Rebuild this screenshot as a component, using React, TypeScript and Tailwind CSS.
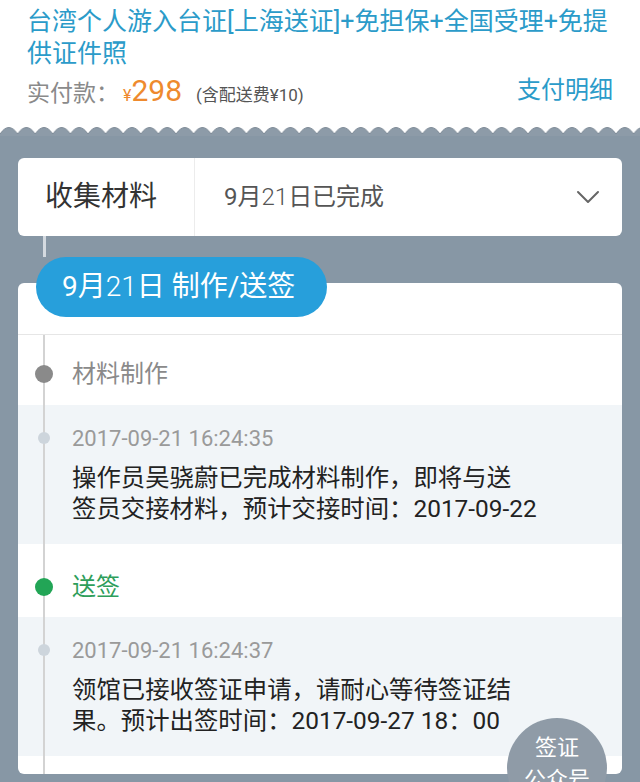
const Wave = () => (
  <svg className="block h-[10px] w-full" viewBox="0 0 640 10" preserveAspectRatio="none">
    <defs>
      <pattern id="scallop" width="17.6" height="10" patternUnits="userSpaceOnUse">
        <path d="M0 10 V8 Q4.4 1.5 8.8 1.5 Q13.2 1.5 17.6 8 V10 Z" fill="#8d9ba8" />
        <path d="M0 8 Q4.4 1.5 8.8 1.5 Q13.2 1.5 17.6 8" fill="none" stroke="#74828f" strokeWidth="0.9" />
      </pattern>
    </defs>
    <rect width="640" height="10" fill="#ffffff" />
    <rect width="640" height="10" fill="url(#scallop)" />
  </svg>
);

const Chevron = () => (
  <svg width="24" height="14" viewBox="0 0 24 14" fill="none">
    <path d="M2 2 L12 12 L22 2" stroke="#666" strokeWidth="2" strokeLinecap="round" strokeLinejoin="round" />
  </svg>
);

const Step = ({ title, color, dot, pt }: { title: string; color: string; dot: string; pt: string }) => (
  <div className={`flex h-[70px] items-center ${pt}`}>
    <div className="w-[54px]">
      <div className={`relative z-10 ml-[17px] h-[18px] w-[18px] rounded-full ${dot}`} />
    </div>
    <span className={`text-[24px] ${color}`}>{title}</span>
  </div>
);

const Log = ({ time, lines }: { time: string; lines: [string, string] }) => (
  <div className="bg-[#f1f5f8] pb-[20px] pt-[18px]">
    <div className="flex h-[30px] items-center">
      <div className="w-[54px]">
        <div className="relative z-10 ml-[20px] h-[12px] w-[12px] rounded-full bg-[#cdd5dc]" />
      </div>
      <span className="text-[22px] text-[#9a9a9a]">{time}</span>
    </div>
    <p className="mt-[9px] pl-[54px] text-[24.4px] leading-[31px] text-[#222]">
      {lines[0]}
      <br />
      {lines[1]}
    </p>
  </div>
);

export default function App() {
  return (
    <div className="relative h-[782px] w-[640px] overflow-hidden bg-[#8797a5] font-['Roboto','Noto_Sans_CJK_SC',sans-serif]">
      <div className="bg-white pb-[16px] pl-[27px] pr-[20px] pt-[6px]">
        <p className="whitespace-nowrap text-[25px] leading-[32px] text-[#2b9bc9]">
          台湾个人游入台证[上海送证]+免担保+全国受理+免提
          <br />
          供证件照
        </p>
        <div className="flex h-[40px] items-center justify-between pr-[7px]">
          <div className="flex items-baseline">
            <span className="text-[23px] text-[#8a8a8a]">实付款：</span>
            <span className="ml-[4px] text-[16px] text-[#ee8a2e]">¥</span>
            <span className="text-[30px] text-[#ee8a2e]">298</span>
            <span className="ml-[14px] text-[17px] text-[#555]">(含配送费¥10)</span>
          </div>
          <span className="text-[24px] text-[#2b9bc9]">支付明细</span>
        </div>
      </div>
      <Wave />

      <div className="flex flex-col px-[18px] pt-[22px]">
        <div className="flex h-[78px] rounded-[6px] bg-white">
          <div className="flex w-[177px] items-center border-r border-[#ececec] pl-[27px] text-[28px] text-[#333]">
            收集材料
          </div>
          <div className="flex flex-1 items-center justify-between pl-[29px] pr-[22px] text-[24px] text-[#555]">
            <span>
              9月<span className="font-light">21</span>日已完成
            </span>
            <Chevron />
          </div>
        </div>

        <div className="ml-[25px] h-[21px] w-[3px] bg-[#d4dae0]" />

        <div className="relative z-20 ml-[18px] flex h-[60px] w-fit items-center rounded-full bg-[#279fdb] pl-[26px] pr-[32px] text-[28px] text-white">
          <span>
            9月<span className="font-light">21</span>日 制作/送签
          </span>
        </div>

        <div className="-mt-[34px] rounded-[6px] bg-white pb-[18px]">
          <div className="h-[52px] border-b border-[#e6e6e6]" />
          <div className="relative">
            <div className="absolute bottom-[-18px] left-[25px] top-0 w-[2px] bg-[#d3d3d3]" />
            <Step title="材料制作" color="text-[#8a8a8a]" dot="bg-[#8a8a8a]" pt="pt-[8px]" />
            <Log
              time="2017-09-21 16:24:35"
              lines={["操作员吴骁蔚已完成材料制作，即将与送", "签员交接材料，预计交接时间：2017-09-22"]}
            />
            <div className="flex h-[73px] items-center pt-[13px]">
              <div className="w-[54px]">
                <div className="relative z-10 ml-[17px] h-[18px] w-[18px] rounded-full bg-[#22a556]" />
              </div>
              <span className="text-[24px] text-[#2e9e5b]">送签</span>
            </div>
            <Log
              time="2017-09-21 16:24:37"
              lines={["领馆已接收签证申请，请耐心等待签证结", "果。预计出签时间：2017-09-27 18：00"]}
            />
          </div>
        </div>
      </div>

      <div className="absolute left-[507px] top-[718px] z-30 flex h-[100px] w-[100px] flex-col items-center rounded-full bg-[#8f9ba7] pt-[14px] text-[22px] leading-[32px] text-white">
        <span>签证</span>
        <span>公众号</span>
      </div>
    </div>
  );
}
